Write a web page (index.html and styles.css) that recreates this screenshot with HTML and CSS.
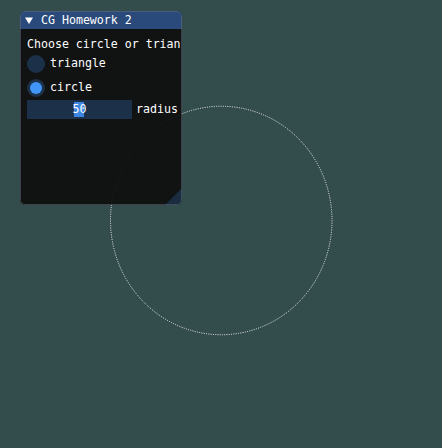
FILE: index.html
```html
<!DOCTYPE html>
<html>
<head>
<meta charset="utf-8">
<link rel="stylesheet" href="styles.css">
</head>
<body>
<svg class="scene" width="442" height="448" viewBox="0 0 442 448">
  <ellipse cx="221.25" cy="220.5" rx="110.75" ry="114.25" class="dots"/>
</svg>
<div class="window">
  <div class="titlebar">
    <svg class="arrow" width="8" height="7" viewBox="0 0 8 7"><polygon points="0,0.5 8,0.5 4,7" fill="#fff"/></svg>
    <span class="title">CG Homework 2</span>
  </div>
  <div class="content">
    <div class="line">Choose circle or triangle</div>
    <div class="radio r1"><span class="dot"></span><span class="label">triangle</span></div>
    <div class="radio r2"><span class="dot on"></span><span class="label">circle</span></div>
    <div class="sliderrow">
      <div class="slider"><span class="grab" style="left:47px"></span><span class="val">50</span></div>
      <span class="label">radius</span>
    </div>
  </div>
  <div class="grip"></div>
</div>
</body>
</html>
```
FILE: styles.css
```css
html, body {
  margin: 0;
  padding: 0;
}
body {
  width: 442px;
  height: 448px;
  background: #334d4d;
  position: relative;
  overflow: hidden;
  font-family: "DejaVu Sans Mono", "Liberation Mono", monospace;
  font-size: 11.6px;
  color: #ffffff;
}
.scene {
  position: absolute;
  left: 0;
  top: 0;
}
.dots {
  fill: none;
  stroke: #f2f2f2;
  stroke-width: 1;
  stroke-dasharray: 1 1.3;
}
.window {
  position: absolute;
  left: 20px;
  top: 11px;
  width: 162px;
  height: 194px;
  background: rgba(15, 15, 15, 0.94);
  border-radius: 5px;
  overflow: hidden;
}
.window::after {
  content: "";
  position: absolute;
  inset: 0;
  border: 1px solid rgba(110, 110, 128, 0.5);
  border-radius: 5px;
  pointer-events: none;
}
.titlebar {
  height: 18px;
  background: #294a7a;
  display: flex;
  align-items: center;
  line-height: 13px;
}
.arrow {
  margin-left: 5px;
  margin-top: 1px;
}
.title {
  margin-left: 8px;
  margin-top: 1px;
}
.content {
  padding: 9px 0 0 7px;
  display: flex;
  flex-direction: column;
  white-space: nowrap;
  line-height: 13px;
}
.line {
  height: 13px;
  width: 153px;
  overflow: hidden;
}
.radio {
  height: 19px;
  display: flex;
  align-items: center;
  gap: 5px;
}
.r1 {
  margin-top: 3px;
}
.r2 {
  margin-top: 5px;
}
.dot {
  width: 18px;
  height: 18px;
  border-radius: 50%;
  background: rgba(41, 74, 122, 0.54);
  display: flex;
  align-items: center;
  justify-content: center;
}
.dot.on::before {
  content: "";
  width: 12px;
  height: 12px;
  border-radius: 50%;
  background: #4296fa;
}
.sliderrow {
  margin-top: 3px;
  height: 19px;
  display: flex;
  align-items: center;
  gap: 4px;
}
.slider {
  position: relative;
  width: 105px;
  height: 19px;
  background: rgba(41, 74, 122, 0.54);
  display: flex;
  align-items: center;
  justify-content: center;
}
.grab {
  position: absolute;
  top: 2px;
  width: 10px;
  height: 15px;
  background: #3d85e0;
}
.val {
  position: relative;
}
.grip {
  position: absolute;
  right: 0;
  bottom: 0;
  width: 17px;
  height: 17px;
  background: rgba(66, 150, 250, 0.2);
  clip-path: polygon(100% 0, 100% 100%, 0 100%);
}
```
